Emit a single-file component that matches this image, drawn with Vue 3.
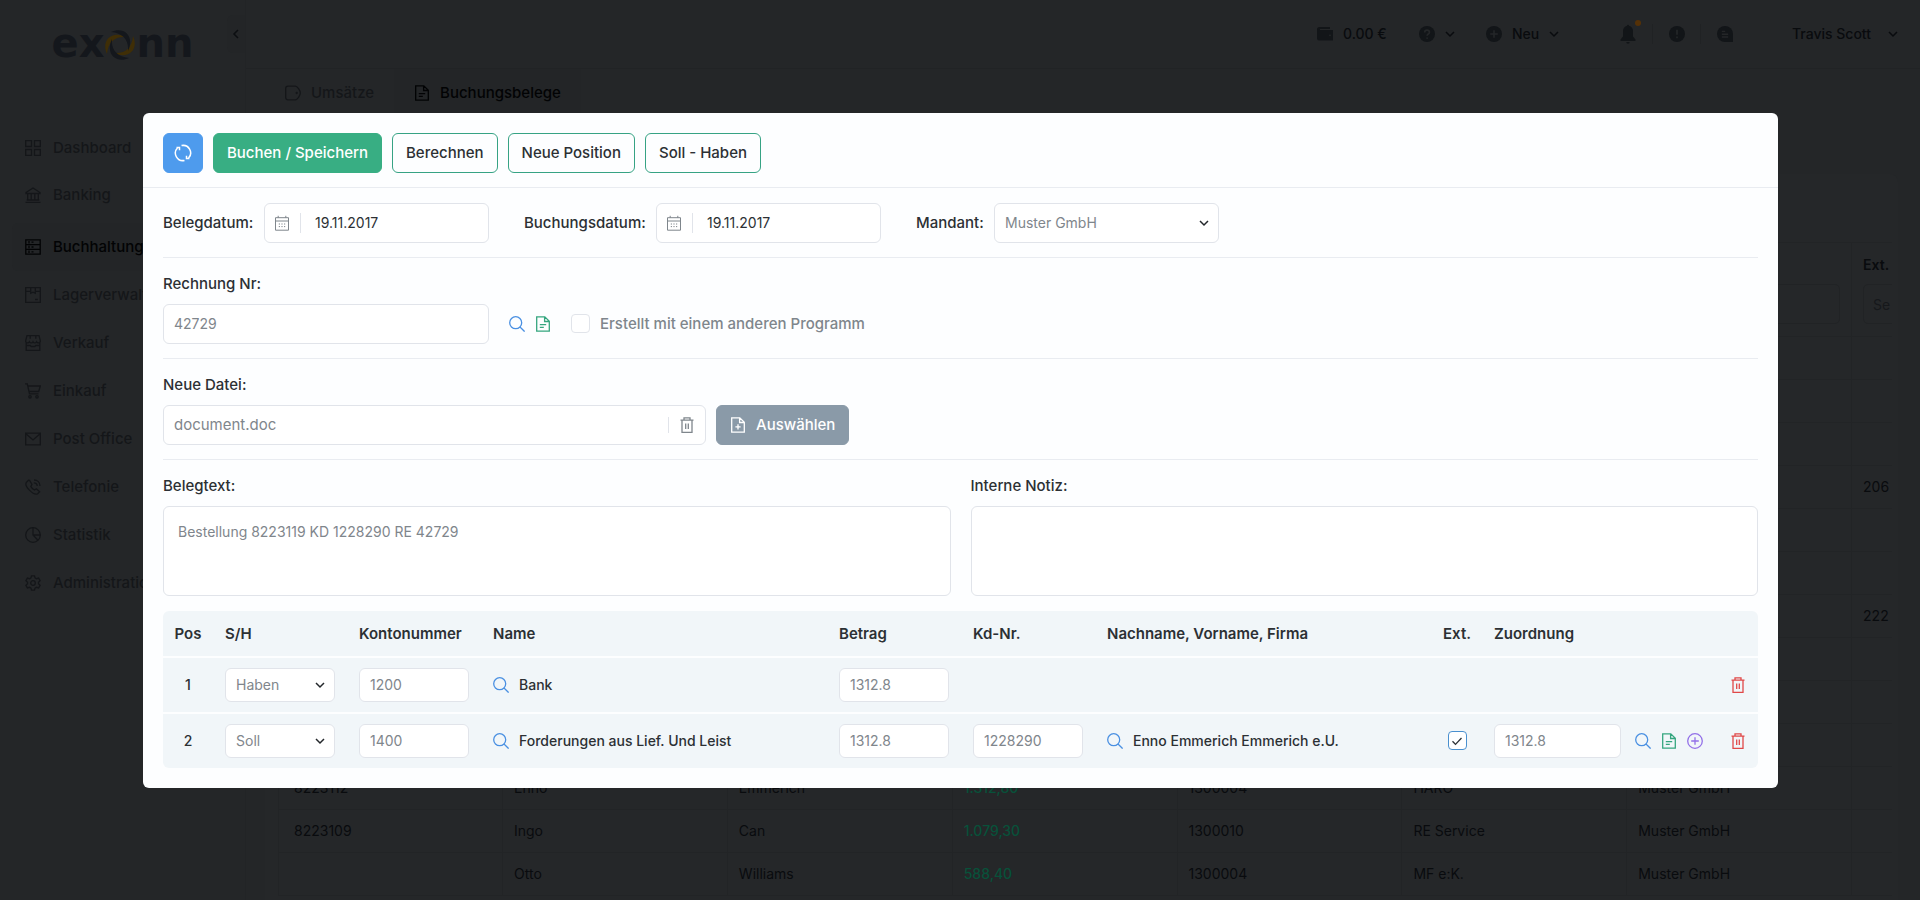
<script setup>
import { ref } from 'vue'

const navItems = [
  { label: 'Dashboard', icon: 'dashboard' },
  { label: 'Banking', icon: 'bank' },
  { label: 'Buchhaltung', icon: 'ledger', active: true },
  { label: 'Lagerverwaltung', icon: 'box' },
  { label: 'Verkauf', icon: 'store' },
  { label: 'Einkauf', icon: 'cart' },
  { label: 'Post Office', icon: 'mail' },
  { label: 'Telefonie', icon: 'phone' },
  { label: 'Statistik', icon: 'pie' },
  { label: 'Administration', icon: 'gear' }
]

const blank = () => ['', '', '', '', '', '', '', '']
const receipts = [
  blank(),
  blank(),
  blank(),
  ['', '', '', '', '', '', '', '206'],
  blank(),
  blank(),
  ['', '', '', '', '', '', '', '222'],
  blank(),
  blank(),
  blank(),
  ['8223112', 'Enno', 'Emmerich', '1.312,80', '1300004', 'HARO', 'Muster GmbH', ''],
  ['8223109', 'Ingo', 'Can', '1.079,30', '1300010', 'RE Service', 'Muster GmbH', ''],
  ['', 'Otto', 'Williams', '588,40', '1300004', 'MF e:K.', 'Muster GmbH', '']
]

const belegdatum = ref('19.11.2017')
const buchungsdatum = ref('19.11.2017')
const mandant = ref('Muster GmbH')
const rechnungNr = ref('42729')
const fremd = ref(false)
const datei = ref('document.doc')
const belegtext = ref('Bestellung 8223119 KD 1228290 RE 42729')
const notiz = ref('')

const positions = ref([
  { pos: 1, sh: 'Haben', konto: '1200', name: 'Bank', betrag: '1312.8' },
  {
    pos: 2,
    sh: 'Soll',
    konto: '1400',
    name: 'Forderungen aus Lief. Und Leist',
    betrag: '1312.8',
    kd: '1228290',
    person: 'Enno Emmerich Emmerich e.U.',
    ext: true,
    zuordnung: '1312.8'
  }
])
</script>

<template>
  <div class="app">
    <svg class="sprite" aria-hidden="true">
      <symbol id="i-dashboard" viewBox="0 0 16 16"><path d="M.7.7h5.8v5.8H.7zM9.5.7h5.8v5.8H9.5zM.7 9.5h5.8v5.8H.7zM9.5 9.5h5.8v5.8H9.5z" /></symbol>
      <symbol id="i-bank" viewBox="0 0 16 16"><path d="M.5 15.3h15M1.7 13h12.6M1 5.5 8 1l7 4.500v1H1zM2.700 6.500V13M6.200 6.500V13M9.800 6.500V13M13.300 6.500V13" /></symbol>
      <symbol id="i-ledger" viewBox="0 0 16 16"><path d="M.8.8h14.400v14.400H.8zM.8 5.600h14.400M.8 10.400h14.400M4 2v2.500M4 6.800v2.500M4 11.600v2.500M6.500 3.200h2M6.500 8h2M6.500 12.800h2" /></symbol>
      <symbol id="i-box" viewBox="0 0 16 16"><path d="M.7.7h14.600v14.600H.7zM.7 4.300h5M10.300 4.300h5M5.700.7v5.600L8 5.200l2.300 1.100V.7M10 12.500h2.800" /></symbol>
      <symbol id="i-store" viewBox="0 0 16 16"><path d="M2 .7h12l1.300 4.800v1.200c-1 1.600-3 1.600-3.700 0-.9 1.600-2.800 1.600-3.600 0-.8 1.600-2.700 1.600-3.600 0-.7 1.600-2.700 1.600-3.700 0V5.500zM5.200.7v3M10.800.7v3M1.200 7.500v7.800h13.600V7.500M1.200 10.500h4l1 1h3.600l1-1h4" /></symbol>
      <symbol id="i-cart" viewBox="0 0 16 16"><path d="M0 .8h2.300l2.200 10h9M2.900 3h12.400l-1.600 5.500H4.100" /><circle cx="5" cy="13.800" r="1.200" /><circle cx="12" cy="13.800" r="1.200" /></symbol>
      <symbol id="i-mail" viewBox="0 0 16 16"><path d="M.7 2.200h14.600v11.600H.7zM.9 2.700 8 9l7.100-6.300" /></symbol>
      <symbol id="i-phone" viewBox="0 0 16 16"><path d="M3.500 1.200 1.400 3.300c-1 1.400-.4 4.300 3 7.800 3.500 3.500 6.700 4.600 8.300 3.600l1.900-2-3.200-3-2 1.300c-1.600-.8-2.700-1.900-3.600-3.600L7 5.400 4.600 1.300zM9 1c3.500 0 6 2.500 6 6M8.800 3.800c2 0 3.400 1.400 3.400 3.300" /></symbol>
      <symbol id="i-pie" viewBox="0 0 16 16"><circle cx="8" cy="8" r="7.300" /><path d="M8 .7V8l5 5.300M8 8h7.300" /></symbol>
      <symbol id="i-gear" viewBox="0 0 16 16"><path d="M6.500.8h3l.5 2.100 1.500.8 2.100-.6 1.500 2.600L13.500 7.200v1.600l1.600 1.500-1.500 2.600-2.100-.6-1.500.8-.5 2.100h-3L6 13.100l-1.500-.8-2.100.6L.9 10.300l1.600-1.500V7.200L.9 5.700l1.500-2.600 2.100.6L6 2.900z" /><circle cx="8" cy="8" r="2.300" /></symbol>
      <symbol id="i-label" viewBox="0 0 16 16"><path d="M3 1.200h7.300c2 0 5 4.300 5 6.800s-3 6.800-5 6.800H3c-1.300 0-2.300-.9-2.300-2.200V3.400c0-1.300 1-2.200 2.300-2.200z" /><circle cx="11.700" cy="8" r=".5" /></symbol>
      <symbol id="i-doc" viewBox="0 0 16 16"><path d="M1.700.8h8.100l4.500 4.500v9.900H1.700zM9.600.8v4.700h4.700M4.800 8.600h6.400M4.800 11.400h4" /></symbol>
      <symbol id="i-doc-plus" viewBox="0 0 16 16"><path d="M1.700.8h8.100l4.500 4.500v9.900H1.700zM9.600.8v4.700h4.700M8 7.300v5.200M5.400 9.900h5.200" /></symbol>
      <symbol id="i-search" viewBox="0 0 16 16"><circle cx="6.700" cy="6.700" r="6" /><path d="m11 11 4.600 4.600" /></symbol>
      <symbol id="i-trash" viewBox="0 0 16 16"><path d="M1.500 3.200h13M5 3V.8h6V3M3 3.400v11.900h10V3.400M6.700 6.500v5.500M9.300 6.500v5.500" /></symbol>
      <symbol id="i-plus" viewBox="0 0 16 16"><circle cx="8" cy="8" r="7.300" /><path d="M8 4.200v7.600M4.200 8h7.600" /></symbol>
      <symbol id="i-calendar" viewBox="0 0 16 16"><path d="M1.500 2.700h13v12.500h-13zM1.500 6h13M4.200.8v2M11.800.8v2" /><path d="M4.800 9h1.200M7.400 9h1.200M10 9h1.200M4.800 11.600h1.200M7.400 11.600h1.200M10 11.600h1.200" /></symbol>
      <symbol id="i-refresh" viewBox="0 0 18 18"><path d="M7.500 1.600A7.500 7.500 0 0 1 14.600 14M10.500 16.400A7.500 7.500 0 0 1 3.400 4M2.500 3.400h3v2.900M15.500 14.600h-3v-2.900" /></symbol>
      <symbol id="i-chevron" viewBox="0 0 10 10"><path d="m1 3 4 4 4-4" /></symbol>
      <symbol id="i-check" viewBox="0 0 12 12"><path d="m1.500 6.200 3 3.200L10.500 3" /></symbol>
      <symbol id="i-wallet" viewBox="0 0 16 16"><path fill="currentColor" stroke="none" d="M2.200 1H13v2H3v1h13v10.500H2A2 2 0 0 1 0 12.500v-9.300C0 2 1 1 2.200 1z" /><circle cx="13" cy="9.300" r=".9" fill="#242628" stroke="none" /></symbol>
      <symbol id="i-help" viewBox="0 0 16 16"><circle cx="8" cy="8" r="8" fill="currentColor" stroke="none" /><path stroke="#242628" stroke-width="1.700" d="M5.700 6.400c0-3 4.700-3 4.700 0 0 1.700-2.300 1.600-2.300 3.400M8.100 11.400v1.400" /></symbol>
      <symbol id="i-add" viewBox="0 0 16 16"><circle cx="8" cy="8" r="8" fill="currentColor" stroke="none" /><path stroke="#242628" stroke-width="1.600" d="M8 4.200v7.600M4.200 8h7.600" /></symbol>
      <symbol id="i-bell" viewBox="0 0 16 20"><path fill="currentColor" stroke="none" d="M7 1.700a1 1 0 0 1 2 0c2.600.7 4 2.700 4 5.300v5.500l2.500 3V17H.5v-1.500l2.500-3V7c0-2.600 1.400-4.600 4-5.300zM6.300 18h3.400a1.700 1.700 0 0 1-3.400 0z" /></symbol>
      <symbol id="i-alert" viewBox="0 0 16 16"><circle cx="8" cy="8" r="8" fill="currentColor" stroke="none" /><path stroke="#242628" stroke-width="1.700" d="M8 3.800v5M8 10.600v1.700" /></symbol>
      <symbol id="i-chat" viewBox="0 0 16 16"><path fill="currentColor" stroke="none" d="M8 0a8 8 0 0 1 8 8v8H8A8 8 0 0 1 8 0z" /><path stroke="#242628" stroke-width="1.400" d="M4.800 5.400h3.400M4.800 8.200h6.400M4.800 11h6.400" /></symbol>
      <symbol id="i-blade" viewBox="0 0 32 32"><path fill="currentColor" d="M3 25C-3 12 7 1 22 8 11 7 4 13 3 25z" /></symbol>
    </svg>

    <aside class="sidebar">
      <div class="brand">
        <a class="logo" href="#" aria-label="exonn">
          <span>ex</span>
          <svg class="swirl" viewBox="0 0 32 32" aria-hidden="true">
            <g class="amber">
              <use href="#i-blade" />
              <use href="#i-blade" transform="rotate(180 16 16)" />
            </g>
            <use href="#i-blade" transform="rotate(90 16 16)" />
            <use href="#i-blade" transform="rotate(270 16 16)" />
          </svg>
          <span>nn</span>
        </a>
        <button class="collapse" type="button" aria-label="Menü einklappen">
          <svg class="chevron left"><use href="#i-chevron" /></svg>
        </button>
      </div>
      <nav class="nav">
        <a v-for="item in navItems" :key="item.label" href="#" :class="['nav-item', { active: item.active }]">
          <svg class="icon"><use :href="'#i-' + item.icon" /></svg>
          <span>{{ item.label }}</span>
        </a>
      </nav>
    </aside>

    <div class="page">
      <header class="topbar">
        <a class="top-group wallet" href="#"><svg class="icon muted"><use href="#i-wallet" /></svg>0.00 €</a>
        <button class="top-group help" type="button" aria-label="Hilfe">
          <svg class="icon muted"><use href="#i-help" /></svg>
          <svg class="chevron end"><use href="#i-chevron" /></svg>
        </button>
        <button class="top-group new" type="button">
          <svg class="icon muted"><use href="#i-add" /></svg>Neu
          <svg class="chevron end"><use href="#i-chevron" /></svg>
        </button>
        <div class="alerts">
          <button class="alert-btn" type="button" aria-label="Benachrichtigungen">
            <svg class="bell muted"><use href="#i-bell" /></svg><i class="dot"></i>
          </button>
          <button class="alert-btn" type="button" aria-label="Warnungen"><svg class="icon muted"><use href="#i-alert" /></svg></button>
          <button class="alert-btn" type="button" aria-label="Nachrichten"><svg class="icon muted"><use href="#i-chat" /></svg></button>
        </div>
        <button class="top-group user" type="button">
          Travis Scott
          <svg class="chevron end"><use href="#i-chevron" /></svg>
        </button>
      </header>
      <nav class="tabs">
        <a href="#" class="tab"><svg class="icon"><use href="#i-label" /></svg>Umsätze</a>
        <a href="#" class="tab active"><svg class="icon"><use href="#i-doc" /></svg>Buchungsbelege</a>
      </nav>
      <main class="content">
        <div class="scroller">
          <table class="receipts">
            <colgroup><col class="first" /></colgroup>
            <thead>
              <tr>
                <th v-for="n in 8" :key="n">
                  <span class="receipt-title">{{ n === 8 ? 'Ext.' : '' }}</span>
                  <input type="text" aria-label="Filter" :placeholder="n === 8 ? 'Se' : ''" />
                </th>
              </tr>
            </thead>
            <tbody>
              <tr v-for="(row, r) in receipts" :key="r">
                <td v-for="(cell, c) in row" :key="c" :class="{ amount: c === 3 }">{{ cell }}</td>
              </tr>
            </tbody>
          </table>
        </div>
      </main>
    </div>

    <div class="overlay">
      <form class="modal" role="dialog" aria-label="Buchungsbeleg" @submit.prevent>
        <div class="toolbar">
          <button class="btn refresh" type="button" aria-label="Aktualisieren"><svg class="refresh-icon"><use href="#i-refresh" /></svg></button>
          <button class="btn primary" type="submit">Buchen / Speichern</button>
          <button class="btn" type="button">Berechnen</button>
          <button class="btn" type="button">Neue Position</button>
          <button class="btn" type="button">Soll - Haben</button>
        </div>
        <div class="body">
          <section class="section dates">
            <label for="belegdatum">Belegdatum:</label>
            <div class="field date">
              <svg class="icon"><use href="#i-calendar" /></svg>
              <input id="belegdatum" v-model="belegdatum" type="text" />
            </div>
            <label for="buchungsdatum">Buchungsdatum:</label>
            <div class="field date">
              <svg class="icon"><use href="#i-calendar" /></svg>
              <input id="buchungsdatum" v-model="buchungsdatum" type="text" />
            </div>
            <label for="mandant">Mandant:</label>
            <div class="select-wrap">
              <select id="mandant" v-model="mandant" class="control"><option>Muster GmbH</option></select>
              <svg class="chevron"><use href="#i-chevron" /></svg>
            </div>
          </section>

          <section class="section">
            <label for="rechnung">Rechnung Nr:</label>
            <div class="line">
              <input id="rechnung" v-model="rechnungNr" class="control invoice" type="text" />
              <div class="actions">
                <button class="icon-btn blue" type="button" aria-label="Rechnung suchen"><svg class="icon"><use href="#i-search" /></svg></button>
                <button class="icon-btn green" type="button" aria-label="Rechnung öffnen"><svg class="icon"><use href="#i-doc" /></svg></button>
              </div>
              <label class="check-label">
                <input v-model="fremd" class="check" type="checkbox" />
                Erstellt mit einem anderen Programm
              </label>
            </div>
          </section>

          <section class="section">
            <label for="datei">Neue Datei:</label>
            <div class="line file-line">
              <div class="field file">
                <input id="datei" v-model="datei" type="text" />
                <button class="icon-btn clear" type="button" aria-label="Datei entfernen"><svg class="icon"><use href="#i-trash" /></svg></button>
              </div>
              <button class="btn choose" type="button"><svg class="icon"><use href="#i-doc-plus" /></svg>Auswählen</button>
            </div>
          </section>

          <section class="notes">
            <div class="note">
              <label for="belegtext">Belegtext:</label>
              <textarea id="belegtext" v-model="belegtext"></textarea>
            </div>
            <div class="note">
              <label for="notiz">Interne Notiz:</label>
              <textarea id="notiz" v-model="notiz"></textarea>
            </div>
          </section>

          <table class="positions">
            <colgroup>
              <col class="w-small" /><col class="w-input" /><col class="w-input" /><col class="w-name" />
              <col class="w-input" /><col class="w-input" /><col /><col class="w-small" /><col class="w-assign" /><col class="w-trash" />
            </colgroup>
            <thead>
              <tr>
                <th class="center">Pos</th>
                <th>S/H</th>
                <th>Kontonummer</th>
                <th>Name</th>
                <th>Betrag</th>
                <th>Kd-Nr.</th>
                <th>Nachname, Vorname, Firma</th>
                <th class="center">Ext.</th>
                <th>Zuordnung</th>
                <th></th>
              </tr>
            </thead>
            <tbody>
              <tr v-for="p in positions" :key="p.pos">
                <td class="center">{{ p.pos }}</td>
                <td>
                  <div class="select-wrap">
                    <select v-model="p.sh" class="control small" aria-label="S/H"><option>Haben</option><option>Soll</option></select>
                    <svg class="chevron"><use href="#i-chevron" /></svg>
                  </div>
                </td>
                <td><input v-model="p.konto" class="control small" type="text" aria-label="Kontonummer" /></td>
                <td>
                  <div class="lookup">
                    <button class="icon-btn blue" type="button" aria-label="Konto suchen"><svg class="icon"><use href="#i-search" /></svg></button>
                    {{ p.name }}
                  </div>
                </td>
                <td><input v-model="p.betrag" class="control small" type="text" aria-label="Betrag" /></td>
                <td><input v-if="p.kd" v-model="p.kd" class="control small" type="text" aria-label="Kd-Nr." /></td>
                <td>
                  <div v-if="p.person" class="lookup">
                    <button class="icon-btn blue" type="button" aria-label="Kunde suchen"><svg class="icon"><use href="#i-search" /></svg></button>
                    {{ p.person }}
                  </div>
                </td>
                <td class="center">
                  <span v-if="p.person" class="check-box">
                    <input v-model="p.ext" class="check" type="checkbox" aria-label="Ext." />
                    <svg v-if="p.ext" class="tick"><use href="#i-check" /></svg>
                  </span>
                </td>
                <td>
                  <div v-if="p.zuordnung" class="assign">
                    <input v-model="p.zuordnung" class="control small" type="text" aria-label="Zuordnung" />
                    <div class="actions">
                      <button class="icon-btn blue" type="button" aria-label="Zuordnung suchen"><svg class="icon"><use href="#i-search" /></svg></button>
                      <button class="icon-btn green" type="button" aria-label="Beleg öffnen"><svg class="icon"><use href="#i-doc" /></svg></button>
                      <button class="icon-btn purple" type="button" aria-label="Zuordnung hinzufügen"><svg class="icon"><use href="#i-plus" /></svg></button>
                    </div>
                  </div>
                </td>
                <td><button class="icon-btn red" type="button" aria-label="Position löschen"><svg class="icon"><use href="#i-trash" /></svg></button></td>
              </tr>
            </tbody>
          </table>
        </div>
      </form>
    </div>
  </div>
</template>

<style>
body {
  margin: 0;
  background: #242628;
}
</style>

<style scoped>
* {
  box-sizing: border-box;
}
button,
input,
select,
textarea {
  margin: 0;
  font: inherit;
  color: inherit;
  outline: none;
}
input,
select,
textarea {
  font-weight: 400;
}
a {
  color: inherit;
  text-decoration: none;
}
button {
  padding: 0;
  border: 0;
  background: none;
  cursor: pointer;
}
.app {
  display: flex;
  height: 100vh;
  overflow: hidden;
  background: #242628;
  color: #090b0e;
  font: 400 14px/20px Inter, "Liberation Sans", sans-serif;
}
.sprite {
  position: absolute;
  width: 0;
  height: 0;
}
.icon,
.bell,
.tick,
.chevron,
.refresh-icon {
  display: block;
  flex: none;
  width: 16px;
  height: 16px;
  fill: none;
  stroke: currentColor;
  stroke-width: 1.3;
}
.bell {
  height: 20px;
}
.chevron {
  width: 10px;
  height: 10px;
  stroke-width: 1.5;
}
.chevron.left {
  color: #0c0e11;
  transform: rotate(90deg);
}

/* Sidebar */
.sidebar {
  flex: none;
  width: 246px;
  border-right: 1px solid #222426;
}
.brand {
  display: flex;
  justify-content: space-between;
  height: 124px;
  padding: 15px 0 0 49px;
}
.logo {
  display: flex;
  align-items: center;
  justify-content: center;
  width: 147px;
  height: 60px;
  color: #14171c;
  font: 700 40px/56px "DejaVu Sans", sans-serif;
}
.logo span {
  height: 60px;
}
.swirl {
  flex: none;
  width: 32px;
  height: 32px;
}
.amber {
  color: #3f2e06;
}
.collapse {
  display: flex;
  align-items: center;
  justify-content: center;
  width: 18px;
  height: 38px;
  border-radius: 6px 0 0 6px;
  background: #232527;
}
.nav {
  display: flex;
  flex-direction: column;
  padding: 0 12px;
}
.nav-item {
  display: flex;
  align-items: center;
  gap: 12px;
  height: 48px;
  padding: 0 13px;
  border-radius: 6px;
  color: #141619;
  font-size: 15px;
  font-weight: 500;
}
.nav-item:nth-child(2) {
  height: 46px;
}
.nav-item.active {
  margin-top: 5px;
  background: #232527;
  color: #020304;
}

/* Page behind the dialog */
.page {
  display: flex;
  flex: 1;
  flex-direction: column;
  min-width: 0;
}
.topbar {
  display: flex;
  flex: none;
  align-items: center;
  justify-content: flex-end;
  height: 69px;
  padding-right: 22px;
  border-bottom: 1px solid #212325;
  font-weight: 500;
}
.muted {
  color: #121518;
}
.top-group {
  display: flex;
  align-items: center;
  gap: 10px;
  white-space: nowrap;
}
.top-group .end {
  margin-left: auto;
}
.wallet {
  width: 71px;
  margin-right: 31px;
}
.help {
  width: 36px;
  margin-right: 31px;
}
.new {
  width: 73px;
  margin-right: 45px;
}
.user {
  width: 106px;
  margin-left: 44px;
}
.alerts {
  display: flex;
}
.alert-btn {
  position: relative;
  display: flex;
  align-items: center;
  justify-content: center;
  width: 48px;
  height: 20px;
}
.alert-btn + .alert-btn {
  border-left: 1px solid #202224;
}
.dot {
  position: absolute;
  top: -4px;
  right: 11px;
  width: 6px;
  height: 6px;
  border-radius: 50%;
  background: #553107;
}
.tabs {
  display: flex;
  flex: none;
  height: 48px;
  padding-left: 19px;
}
.tab {
  display: flex;
  align-items: center;
  gap: 10px;
  padding: 0 20px;
  color: #141619;
  font-size: 15px;
  font-weight: 500;
}
.tab.active {
  background: #232527;
  color: #020304;
}
.content {
  flex: 1;
  min-height: 0;
  margin: 57px 22px 0 19px;
  padding: 68px 6px 0 13px;
  border-radius: 8px 8px 0 0;
  background: #252729;
}
.scroller {
  height: 100%;
  overflow: hidden;
}
.receipts {
  width: 1799px;
  table-layout: fixed;
  border-collapse: collapse;
}
.receipts .first {
  width: 224px;
}
.receipts th,
.receipts td {
  height: 43px;
  padding: 0 11px;
  border: 1px solid #222426;
  text-align: left;
  font-weight: 400;
}
.receipts td:first-child {
  padding-left: 15px;
}
.receipts th {
  height: 94px;
}
.receipt-title {
  display: block;
  height: 20px;
  margin-bottom: 9px;
  font-weight: 600;
}
.receipts input {
  width: 100%;
  height: 40px;
  padding: 0 9px;
  border: 1px solid #212325;
  border-radius: 5px;
  background: transparent;
}
.receipts input::placeholder {
  color: #16181b;
  opacity: 1;
}
.receipts .amount {
  color: #08513a;
  font-weight: 500;
}

/* Dialog */
.overlay {
  position: fixed;
  inset: 0;
  display: flex;
  align-items: center;
  padding: 0 142px 0 143px;
}
.modal {
  flex: 1;
  min-width: 0;
  border-radius: 6px;
  background: #fdfeff;
  color: #2c3034;
}
.toolbar {
  display: flex;
  gap: 10px;
  padding: 20px 20px 14px;
  border-bottom: 1px solid #e9ecf1;
}
.btn {
  display: flex;
  align-items: center;
  justify-content: center;
  height: 40px;
  padding: 0 13px;
  border: 1px solid #36a384;
  border-radius: 6px;
  font-size: 15px;
  font-weight: 500;
  white-space: nowrap;
}
.btn.primary {
  border-color: #38ae83;
  background: #38ae83;
  color: #fff;
}
.btn.refresh {
  width: 40px;
  padding: 0;
  border-color: #4e9bed;
  background: #4e9bed;
  color: #fff;
}
.refresh-icon {
  width: 18px;
  height: 18px;
  stroke-width: 1.5;
}
.btn.choose {
  gap: 10px;
  border-color: #8a9aa8;
  background: #8a9aa8;
  color: #fff;
}
.body {
  padding: 15px 20px 20px;
}
.section {
  margin-bottom: 16px;
  padding-bottom: 14px;
  border-bottom: 1px solid #e9ecf1;
}
label {
  display: block;
  font-size: 15px;
  font-weight: 500;
}
.section > label,
.note > label {
  margin-bottom: 10px;
}
.dates {
  display: grid;
  grid-template-columns: 101px 225px 167px 225px 113px 225px;
  align-items: center;
}
.section.dates > label {
  margin: 0;
}
.dates > label:nth-of-type(n + 2) {
  padding-left: 35px;
}
.control,
.field {
  width: 100%;
  height: 40px;
  border: 1px solid #e1e4ea;
  border-radius: 6px;
  background: #fff;
}
.control {
  display: block;
  padding: 0 10px;
  color: #7f868c;
}
.control.small {
  height: 34px;
}
.field {
  display: flex;
  align-items: center;
}
.field input {
  flex: 1;
  min-width: 0;
  border: 0;
  background: none;
}
.date {
  padding: 0 9px;
  color: #7f868c;
}
.date .icon {
  stroke-width: 1;
}
.date input {
  margin-left: 10px;
  padding: 0 0 0 14px;
  border-left: 1px solid #e1e4ea;
  color: #2c3034;
}
.select-wrap {
  display: grid;
  align-items: center;
}
.select-wrap > * {
  grid-area: 1 / 1;
}
.select-wrap select {
  appearance: none;
}
.select-wrap .chevron {
  justify-self: end;
  margin-right: 10px;
  color: #23272b;
  pointer-events: none;
}
.line {
  display: flex;
  align-items: center;
  gap: 20px;
}
.control.invoice {
  width: 326px;
}
.actions {
  display: flex;
  gap: 10px;
}
.icon-btn {
  display: block;
}
.blue {
  color: #4a90e2;
}
.green {
  color: #35a67f;
}
.purple {
  color: #9370e8;
}
.red {
  color: #e04848;
}
.check-label {
  display: flex;
  align-items: center;
  gap: 10px;
  color: #7f868c;
}
.check {
  flex: none;
  width: 19px;
  height: 19px;
  border: 1px solid #e1e4ea;
  border-radius: 4px;
  background: #fff;
  appearance: none;
}
.file-line {
  gap: 10px;
}
.file {
  width: 543px;
  color: #7f868c;
}
.file input {
  padding: 0 10px;
  font-size: 15px;
}
.file .clear {
  padding: 0 10px;
  border-left: 1px solid #e1e4ea;
}
.notes {
  display: grid;
  grid-template-columns: 1fr 1fr;
  gap: 20px;
  margin-bottom: 15px;
}
textarea {
  display: block;
  width: 100%;
  height: 90px;
  padding: 15px 14px;
  border: 1px solid #e1e4ea;
  border-radius: 6px;
  background: #fff;
  color: #7f868c;
  resize: none;
}

/* Position table */
.positions {
  width: 100%;
  table-layout: fixed;
  border-spacing: 0;
  border-radius: 6px;
  overflow: hidden;
}
.w-small {
  width: 50px;
}
.w-input {
  width: 134px;
}
.w-name {
  width: 346px;
}
.w-assign {
  width: 236px;
}
.w-trash {
  width: 40px;
}
.positions th,
.positions td {
  padding: 0 12px;
  background: #f1f6f9;
  text-align: left;
  font-weight: 500;
  white-space: nowrap;
}
.positions th {
  height: 45px;
  font-size: 15px;
  font-weight: 600;
}
.positions td {
  height: 56px;
  border-top: 2px solid #fdfeff;
}
.positions .center {
  padding: 0;
  text-align: center;
}
.positions th,
.positions th.center {
  padding-top: 2px;
}
.lookup,
.assign {
  display: flex;
  align-items: center;
  gap: 10px;
}
.assign {
  gap: 14px;
}
.assign .control {
  width: 127px;
}
.check-box {
  display: grid;
  place-items: center;
}
.check-box > * {
  grid-area: 1 / 1;
}
.check:checked {
  border-color: #4a90cf;
}
.tick {
  width: 12px;
  height: 12px;
  pointer-events: none;
}
</style>
